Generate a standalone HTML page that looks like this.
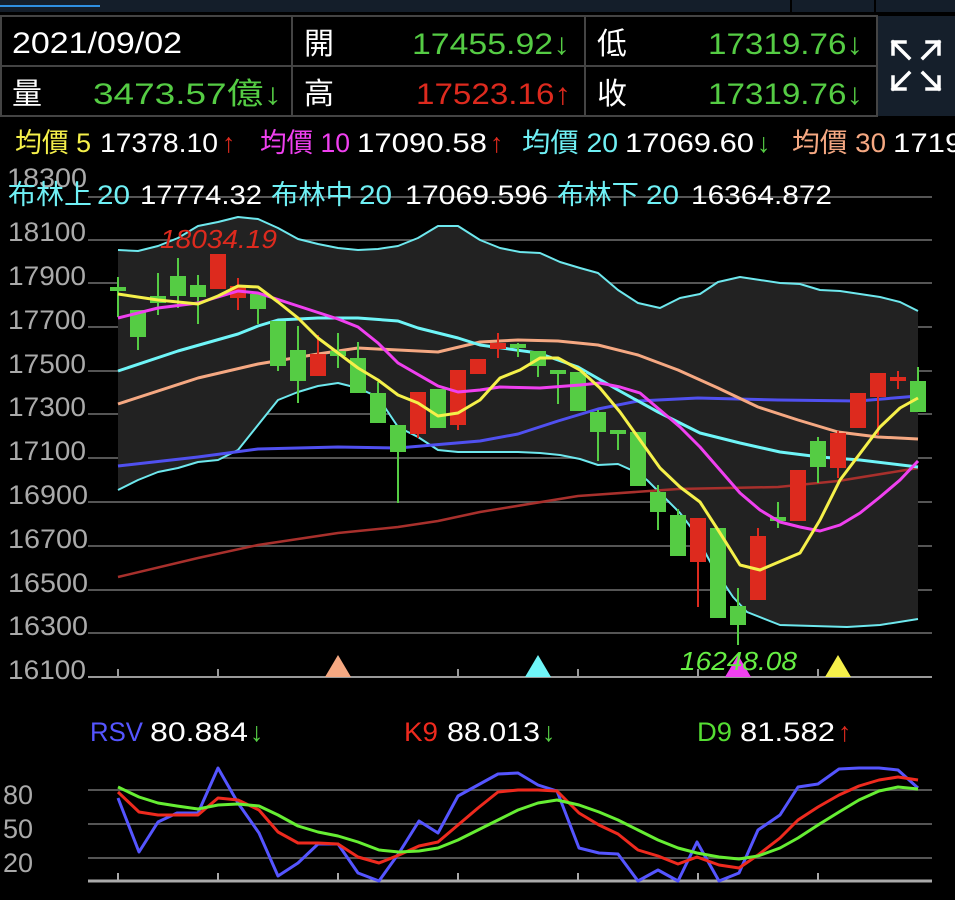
<!DOCTYPE html>
<html><head><meta charset="utf-8"><style>
body{margin:0;background:#000;width:955px;height:900px;overflow:hidden;font-family:"Liberation Sans","Noto Sans CJK TC",sans-serif;}
svg{display:block}
</style></head><body>
<svg width="955" height="900" viewBox="0 0 955 900" xmlns="http://www.w3.org/2000/svg" font-family="Liberation Sans, Noto Sans CJK TC, sans-serif">
<rect x="0" y="0" width="955" height="12" fill="#141e2a"/>
<rect x="0" y="5" width="100" height="2" fill="#2f8fe0"/>
<rect x="790" y="0" width="2" height="12" fill="#000"/>
<rect x="874" y="0" width="2" height="12" fill="#000"/>
<rect x="877" y="16" width="78" height="100" fill="#151f2b"/>
<g stroke="#444" stroke-width="2" fill="none">
<rect x="1" y="16" width="876" height="100"/>
<line x1="1" y1="66" x2="877" y2="66"/>
<line x1="292" y1="16" x2="292" y2="116"/>
<line x1="585" y1="16" x2="585" y2="116"/>
</g>
<g stroke="#fff" stroke-width="3.5" fill="none" stroke-linecap="square">
<path d="M893 54V42H905M893 42L909 58"/>
<path d="M939 54V42H927M939 42L923 58"/>
<path d="M893 77V89H905M893 89L909 73"/>
<path d="M939 77V89H927M939 89L923 73"/>
</g>
<g font-size="30" lengthAdjust="spacingAndGlyphs">
<text x="12" y="53" fill="#fff" textLength="170" lengthAdjust="spacingAndGlyphs">2021/09/02</text>
<text x="12" y="104" fill="#fff">量</text>
<text x="93" y="104" fill="#55cc44" textLength="189" lengthAdjust="spacingAndGlyphs">3473.57億↓</text>
<text x="304" y="54" fill="#fff">開</text>
<text x="412" y="54" fill="#55cc44" textLength="158" lengthAdjust="spacingAndGlyphs">17455.92↓</text>
<text x="304" y="104" fill="#fff">高</text>
<text x="416" y="104" fill="#dd2a1e" textLength="155" lengthAdjust="spacingAndGlyphs">17523.16↑</text>
<text x="597" y="54" fill="#fff">低</text>
<text x="708" y="54" fill="#55cc44" textLength="155" lengthAdjust="spacingAndGlyphs">17319.76↓</text>
<text x="597" y="104" fill="#fff">收</text>
<text x="708" y="104" fill="#55cc44" textLength="155" lengthAdjust="spacingAndGlyphs">17319.76↓</text>
</g>
<g font-size="27">
<text x="15" y="152" fill="#f5f04a" textLength="76" lengthAdjust="spacingAndGlyphs">均價 5</text>
<text x="100" y="152" fill="#fff" textLength="118" lengthAdjust="spacingAndGlyphs">17378.10</text>
<text x="222" y="152" fill="#dd2a1e">↑</text>
<text x="260" y="152" fill="#f040f0" textLength="90" lengthAdjust="spacingAndGlyphs">均價 10</text>
<text x="357" y="152" fill="#fff" textLength="130" lengthAdjust="spacingAndGlyphs">17090.58</text>
<text x="490" y="152" fill="#dd2a1e">↑</text>
<text x="522" y="152" fill="#6ff0f5" textLength="96" lengthAdjust="spacingAndGlyphs">均價 20</text>
<text x="625" y="152" fill="#fff" textLength="129" lengthAdjust="spacingAndGlyphs">17069.60</text>
<text x="757" y="152" fill="#55cc44">↓</text>
<text x="792" y="152" fill="#f5a882" textLength="94" lengthAdjust="spacingAndGlyphs">均價 30</text>
<text x="893" y="152" fill="#fff" textLength="130" lengthAdjust="spacingAndGlyphs">17190.63</text>
</g>
<!-- grid -->
<g stroke="#555" stroke-width="2">
<line x1="88" y1="240" x2="932" y2="240"/>
<line x1="88" y1="283" x2="932" y2="283"/>
<line x1="88" y1="327" x2="932" y2="327"/>
<line x1="88" y1="371" x2="932" y2="371"/>
<line x1="88" y1="414" x2="932" y2="414"/>
<line x1="88" y1="458" x2="932" y2="458"/>
<line x1="88" y1="502" x2="932" y2="502"/>
<line x1="88" y1="546" x2="932" y2="546"/>
<line x1="88" y1="590" x2="932" y2="590"/>
<line x1="88" y1="633" x2="932" y2="633"/>
</g>
<line x1="88" y1="677" x2="932" y2="677" stroke="#999" stroke-width="2"/>
<g stroke="#999" stroke-width="2"><line x1="118" y1="669" x2="118" y2="677"/><line x1="218" y1="669" x2="218" y2="677"/><line x1="458" y1="669" x2="458" y2="677"/><line x1="578" y1="669" x2="578" y2="677"/><line x1="698" y1="669" x2="698" y2="677"/><line x1="818" y1="669" x2="818" y2="677"/></g>
<g font-size="27" fill="#aaa">
<text x="7" y="187" textLength="80" lengthAdjust="spacingAndGlyphs">18300</text>
<text x="8" y="241" textLength="78" lengthAdjust="spacingAndGlyphs">18100</text>
<text x="8" y="285" textLength="78" lengthAdjust="spacingAndGlyphs">17900</text>
<text x="8" y="329" textLength="78" lengthAdjust="spacingAndGlyphs">17700</text>
<text x="8" y="373" textLength="78" lengthAdjust="spacingAndGlyphs">17500</text>
<text x="8" y="416" textLength="78" lengthAdjust="spacingAndGlyphs">17300</text>
<text x="8" y="460" textLength="78" lengthAdjust="spacingAndGlyphs">17100</text>
<text x="8" y="504" textLength="80" lengthAdjust="spacingAndGlyphs">16900</text>
<text x="8" y="548" textLength="80" lengthAdjust="spacingAndGlyphs">16700</text>
<text x="8" y="592" textLength="80" lengthAdjust="spacingAndGlyphs">16500</text>
<text x="8" y="635" textLength="80" lengthAdjust="spacingAndGlyphs">16300</text>
<text x="8" y="679" textLength="78" lengthAdjust="spacingAndGlyphs">16100</text>
</g>
<line x1="88" y1="197" x2="932" y2="197" stroke="#555" stroke-width="2"/>
<!-- band fill -->
<path d="M118 250L138 251L158 246L178 238L198 226L218 222L238 217L258 219L278 228L298 239L318 244L338 248L358 250L378 249L398 246L418 238L438 226L458 226L480 240L500 248L520 252L540 253L560 262L580 268L598 273L618 290L638 303L660 308L680 298L700 294L718 282L740 277L760 280L780 283L800 284L820 290L840 291L860 294L880 297L900 302L918 311L918 619L880 625L847 627L780 625L747 612L733 597L713 567L693 530L680 513L647 480L638 473L618 464L598 465L580 459L560 455L540 453L518 452L478 452L458 452L438 450L418 437L398 427L378 397L358 388L338 383L318 386L298 392L278 400L258 425L238 450L218 460L198 462L178 468L158 472L138 480L118 490Z" fill="#222"/>
<g fill="none" stroke-width="2" stroke-linejoin="round">
<path stroke="#6ee8ee" d="M118 250L138 251L158 246L178 238L198 226L218 222L238 217L258 219L278 228L298 239L318 244L338 248L358 250L378 249L398 246L418 238L438 226L458 226L480 240L500 248L520 252L540 253L560 262L580 268L598 273L618 290L638 303L660 308L680 298L700 294L718 282L740 277L760 280L780 283L800 284L820 290L840 291L860 294L880 297L900 302L918 311"/>
<path stroke="#6ee8ee" d="M118 490L138 480L158 472L178 468L198 462L218 460L238 450L258 425L278 400L298 392L318 386L338 383L358 388L378 397L398 427L418 437L438 450L458 452L478 452L518 452L540 453L560 455L580 459L598 465L618 464L638 473L647 480L680 513L693 530L713 567L733 597L747 612L780 625L847 627L880 625L918 619"/>
<path stroke="#a8302c" stroke-width="2.5" d="M118 577L198 558L258 545L338 533L398 527L438 521L480 512L578 496L678 489L778 487L838 481L918 468"/>
<path stroke="#5050f0" stroke-width="3" d="M118 466L198 457L258 449L338 447L398 448L480 441L518 434L558 421L598 409L638 401L698 398L778 400L858 401L918 396"/>
<path stroke="#f5a882" stroke-width="3" d="M118 404L198 378L258 364L318 354L358 348L438 352L480 342L518 340L558 341L598 345L638 355L678 370L718 388L758 407L798 420L838 432L878 437L918 439"/>
<path stroke="#6ff5f8" stroke-width="3" d="M118 371L178 351L238 334L258 326L278 320L318 318L358 318L398 321L418 328L458 338L480 345L538 353L578 367L618 390L658 412L700 433L740 443L780 452L820 457L860 460L918 467"/>
</g>
<!-- candles -->
<g stroke-width="2">
<g stroke="#55cc44" fill="#55cc44">
<line x1="118" y1="277" x2="118" y2="317"/><rect x="111" y="288" width="14" height="2"/>
<line x1="138" y1="311" x2="138" y2="350"/><rect x="131" y="311" width="14" height="25"/>
<line x1="158" y1="273" x2="158" y2="315"/><rect x="151" y="297" width="14" height="5"/>
<line x1="178" y1="258" x2="178" y2="308"/><rect x="171" y="277" width="14" height="18"/>
<line x1="198" y1="275" x2="198" y2="324"/><rect x="191" y="286" width="14" height="10"/>
<line x1="258" y1="295" x2="258" y2="324"/><rect x="251" y="295" width="14" height="13"/>
<line x1="278" y1="322" x2="278" y2="371"/><rect x="271" y="322" width="14" height="43"/>
<line x1="298" y1="326" x2="298" y2="403"/><rect x="291" y="351" width="14" height="29"/>
<line x1="338" y1="333" x2="338" y2="368"/><rect x="331" y="352" width="14" height="3"/>
<line x1="358" y1="342" x2="358" y2="392"/><rect x="351" y="359" width="14" height="33"/>
<line x1="378" y1="382" x2="378" y2="422"/><rect x="371" y="394" width="14" height="28"/>
<line x1="398" y1="426" x2="398" y2="503"/><rect x="391" y="426" width="14" height="25"/>
<line x1="438" y1="390" x2="438" y2="427"/><rect x="431" y="390" width="14" height="37"/>
<line x1="518" y1="343" x2="518" y2="357"/><rect x="511" y="345" width="14" height="2"/>
<line x1="538" y1="352" x2="538" y2="377"/><rect x="531" y="352" width="14" height="13"/>
<line x1="558" y1="371" x2="558" y2="404"/><rect x="551" y="371" width="14" height="2"/>
<line x1="578" y1="373" x2="578" y2="410"/><rect x="571" y="373" width="14" height="37"/>
<line x1="598" y1="410" x2="598" y2="461"/><rect x="591" y="413" width="14" height="18"/>
<line x1="618" y1="430" x2="618" y2="450"/><rect x="611" y="431" width="14" height="2"/>
<line x1="638" y1="433" x2="638" y2="485"/><rect x="631" y="433" width="14" height="52"/>
<line x1="658" y1="485" x2="658" y2="530"/><rect x="651" y="493" width="14" height="18"/>
<line x1="678" y1="509" x2="678" y2="555"/><rect x="671" y="516" width="14" height="39"/>
<line x1="718" y1="529" x2="718" y2="617"/><rect x="711" y="529" width="14" height="88"/>
<line x1="738" y1="588" x2="738" y2="645"/><rect x="731" y="607" width="14" height="17"/>
<line x1="778" y1="502" x2="778" y2="528"/><rect x="771" y="518" width="14" height="2"/>
<line x1="818" y1="437" x2="818" y2="483"/><rect x="811" y="442" width="14" height="24"/>
<line x1="918" y1="367" x2="918" y2="411"/><rect x="911" y="382" width="14" height="29"/>
</g>
<g stroke="#dd2a1e" fill="#dd2a1e">
<rect x="211" y="255" width="14" height="33"/>
<line x1="238" y1="278" x2="238" y2="310"/><rect x="231" y="287" width="14" height="10"/>
<line x1="318" y1="335" x2="318" y2="375"/><rect x="311" y="355" width="14" height="20"/>
<line x1="418" y1="393" x2="418" y2="438"/><rect x="411" y="393" width="14" height="40"/>
<line x1="458" y1="371" x2="458" y2="430"/><rect x="451" y="371" width="14" height="53"/>
<rect x="471" y="360" width="14" height="13"/>
<line x1="498" y1="333" x2="498" y2="358"/><rect x="491" y="344" width="14" height="4"/>
<line x1="698" y1="519" x2="698" y2="607"/><rect x="691" y="519" width="14" height="42"/>
<line x1="758" y1="528" x2="758" y2="599"/><rect x="751" y="537" width="14" height="62"/>
<rect x="791" y="471" width="14" height="49"/>
<line x1="838" y1="431" x2="838" y2="478"/><rect x="831" y="434" width="14" height="33"/>
<rect x="851" y="394" width="14" height="33"/>
<line x1="878" y1="374" x2="878" y2="435"/><rect x="871" y="374" width="14" height="22"/>
<line x1="898" y1="371" x2="898" y2="389"/><rect x="891" y="378" width="14" height="2"/>
</g>
</g>
<g fill="none" stroke-width="3" stroke-linejoin="round">
<path stroke="#f040f0" d="M118 318L158 308L198 303L238 291L258 293L298 306L338 319L358 327L378 343L398 363L438 386L458 392L480 390L500 387L540 388L580 385L600 383L620 387L640 393L660 410L680 427L700 447L720 470L740 493L760 510L780 522L800 527L820 531L840 525L860 513L880 497L900 480L918 461"/>
<path stroke="#f5f04a" d="M118 294L158 300L178 302L198 304L218 296L238 286L258 287L278 302L298 318L318 338L338 353L358 368L378 380L398 395L418 403L438 416L458 413L480 400L500 378L520 370L540 358L558 358L580 370L600 388L620 412L640 440L660 468L680 487L700 502L720 533L740 565L760 570L800 553L820 520L840 480L880 427L900 408L918 398"/>
</g>
<g font-size="27">
<text x="8" y="204" fill="#6ff0f5" textLength="84" lengthAdjust="spacingAndGlyphs">布林上</text>
<text x="97" y="204" fill="#6ff0f5" textLength="33" lengthAdjust="spacingAndGlyphs">20</text>
<text x="140" y="204" fill="#fff" textLength="122" lengthAdjust="spacingAndGlyphs">17774.32</text>
<text x="271" y="204" fill="#6ff0f5" textLength="82" lengthAdjust="spacingAndGlyphs">布林中</text>
<text x="359" y="204" fill="#6ff0f5" textLength="33" lengthAdjust="spacingAndGlyphs">20</text>
<text x="405" y="204" fill="#fff" textLength="143" lengthAdjust="spacingAndGlyphs">17069.596</text>
<text x="557" y="204" fill="#6ff0f5" textLength="82" lengthAdjust="spacingAndGlyphs">布林下</text>
<text x="646" y="204" fill="#6ff0f5" textLength="33" lengthAdjust="spacingAndGlyphs">20</text>
<text x="691" y="204" fill="#fff" textLength="141" lengthAdjust="spacingAndGlyphs">16364.872</text>
</g>
<text x="160" y="248" font-size="26" font-style="italic" fill="#dd2a1e" textLength="117" lengthAdjust="spacingAndGlyphs">18034.19</text>
<polygon points="338,655 325,677 351,677" fill="#f5a882"/>
<polygon points="538,655 525,677 551,677" fill="#6ff5f8"/>
<polygon points="738,655 725,677 751,677" fill="#f040f0"/>
<polygon points="838,655 825,677 851,677" fill="#f5f04a"/>
<text x="680" y="670" font-size="26" font-style="italic" fill="#66ee44" textLength="117" lengthAdjust="spacingAndGlyphs">16248.08</text>
<!-- KD -->
<g font-size="27">
<text x="90" y="741" fill="#5555ff" textLength="53" lengthAdjust="spacingAndGlyphs">RSV</text>
<text x="150" y="741" fill="#fff" textLength="98" lengthAdjust="spacingAndGlyphs">80.884</text>
<text x="250" y="741" fill="#55cc44">↓</text>
<text x="404" y="741" fill="#ee2a1e" textLength="34" lengthAdjust="spacingAndGlyphs">K9</text>
<text x="447" y="741" fill="#fff" textLength="93" lengthAdjust="spacingAndGlyphs">88.013</text>
<text x="542" y="741" fill="#55cc44">↓</text>
<text x="697" y="741" fill="#55dd33" textLength="35" lengthAdjust="spacingAndGlyphs">D9</text>
<text x="740" y="741" fill="#fff" textLength="95" lengthAdjust="spacingAndGlyphs">81.582</text>
<text x="838" y="741" fill="#dd2a1e">↑</text>
</g>
<g stroke="#555" stroke-width="2"><line x1="88" y1="790" x2="932" y2="790"/><line x1="88" y1="824" x2="932" y2="824"/><line x1="88" y1="858" x2="932" y2="858"/></g>
<line x1="88" y1="881" x2="932" y2="881" stroke="#aaa" stroke-width="3"/>
<g stroke="#aaa" stroke-width="2"><line x1="118" y1="873" x2="118" y2="881"/><line x1="218" y1="873" x2="218" y2="881"/><line x1="338" y1="873" x2="338" y2="881"/><line x1="458" y1="873" x2="458" y2="881"/><line x1="578" y1="873" x2="578" y2="881"/><line x1="698" y1="873" x2="698" y2="881"/><line x1="818" y1="873" x2="818" y2="881"/></g>
<g font-size="27" fill="#aaa"><text x="3" y="804">80</text><text x="3" y="838">50</text><text x="3" y="872">20</text></g>
<g fill="none" stroke-width="3" stroke-linejoin="round">
<path stroke="#5555ff" d="M118 798L139 852L158 822L177 813L198 813L218 768L238 803L259 833L278 876L298 863L318 844L338 844L358 873L379 881L399 853L419 821L438 833L458 796L478 785L498 774L518 773L538 785L557 791L579 848L599 853L618 854L638 881L658 870L678 881L697 842L719 881L739 873L758 830L780 815L798 787L818 784L839 769L859 768L879 768L898 770L918 788"/>
<path stroke="#ee2a1e" d="M118 792L139 812L158 815L177 815L198 815L218 798L238 800L259 810L278 832L298 843L318 843L338 844L358 857L379 863L399 855L419 846L438 842L458 825L478 808L498 792L518 790L538 790L557 791L579 813L599 825L618 834L638 850L658 856L678 864L697 857L719 865L739 868L758 855L780 838L798 820L818 807L839 795L859 786L879 780L898 777L918 780"/>
<path stroke="#66ee33" d="M118 787L139 797L158 803L177 806L198 809L218 805L238 804L259 806L278 815L298 826L318 832L338 836L358 842L379 850L399 852L419 851L438 848L458 840L478 830L498 820L518 810L538 803L557 800L579 805L599 812L618 820L638 830L658 840L678 848L697 853L719 857L739 859L758 856L780 848L798 838L818 825L839 812L859 800L879 791L898 787L918 789"/>
</g>
</svg>
</body></html>
